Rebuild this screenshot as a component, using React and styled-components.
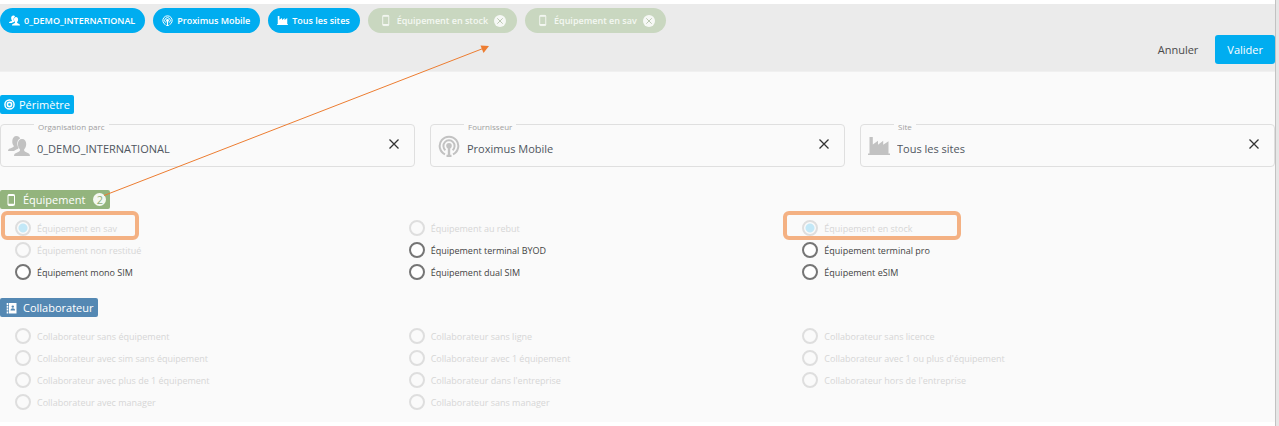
import React from 'react';
import styled, { createGlobalStyle, css } from 'styled-components';

const GlobalStyle = createGlobalStyle`
  *, *::after {
    box-sizing: border-box;
  }

  html {
    background-color: #ffffff;
  }

  body {
    margin: 0;
    font-family: 'Open Sans', sans-serif;
    font-size: 11px;
    color: #4a4a4a;
  }

  button, input {
    font-family: inherit;
  }
`;

const Page = styled.div`
  position: relative;
  display: flex;
  min-height: 100vh;
`;

const Content = styled.div`
  flex: 1;
  padding: 4px 0;
`;

const Gutter = styled.div`
  width: 4px;
  background-color: #e6e6e6;
  border-left: 1px solid #c2c2c2;
`;

const Header = styled.header`
  background-color: #ebebeb;
  padding: 4px 0 7px;
  border-bottom: 1px solid #f0f0f0;
`;

const Pills = styled.div`
  display: flex;
  flex-wrap: wrap;
  gap: 8px;
`;

const Pill = styled.div`
  display: flex;
  align-items: center;
  height: 25px;
  padding: 0 ${props => (props.$removable ? 11 : 10)}px 0 ${props => (props.$removable ? 11 : 9)}px;
  gap: ${props => (props.$removable ? 5 : 4)}px;
  border-radius: 13px;
  background-color: ${props => (props.$removable ? '#c9d7c0' : '#00adf0')};
  color: ${props => (props.$removable ? '#f4f7f2' : '#ffffff')};
  font-size: 9px;
  font-weight: 600;
  white-space: nowrap;
`;

const PillClose = styled.button`
  display: flex;
  align-items: center;
  justify-content: center;
  width: 12px;
  height: 12px;
  margin-left: 1px;
  padding: 0;
  border: 0;
  border-radius: 50%;
  background-color: #f6f8f5;
  color: #b5c3ac;
  cursor: pointer;
`;

const Actions = styled.div`
  display: flex;
  justify-content: flex-end;
  margin-top: 2px;
`;

const Button = styled.button`
  height: 29px;
  padding: 0 ${props => (props.$primary ? 12 : 17)}px;
  border: 0;
  border-radius: 3px;
  background-color: ${props => (props.$primary ? '#00adf0' : 'transparent')};
  color: ${props => (props.$primary ? '#ffffff' : '#4a4a4a')};
  font-size: 11px;
  font-weight: ${props => (props.$primary ? 500 : 400)};
  cursor: pointer;
`;

const Main = styled.main`
  background-color: #fafafa;
  padding: 23px 0 9px;
`;

const Section = styled.section`
  margin-bottom: ${props => props.$space || 0}px;
`;

const Tag = styled.h2`
  display: flex;
  align-items: center;
  width: fit-content;
  height: 19px;
  margin: 0;
  padding: 0 4px;
  gap: ${props => props.$gap || 4}px;
  border-radius: 2px;
  background-color: ${props => props.$color};
  color: #ffffff;
  font-size: 11px;
  font-weight: 500;
`;

const Count = styled.span`
  width: 13px;
  height: 13px;
  margin-left: 3px;
  border-radius: 50%;
  background-color: #f4f8f1;
  color: #8fae79;
  line-height: 13px;
  text-align: center;
`;

const Fields = styled.div`
  display: grid;
  grid-template-columns: repeat(3, 1fr);
  gap: 15px;
  margin-top: 10px;
`;

const Field = styled.div`
  position: relative;
  display: flex;
  align-items: center;
  height: 43px;
  padding: 0 15px 0 7px;
  border: 1px solid #dfdfdf;
  border-radius: 4px;
  color: #c2c2c2;
`;

const FieldLabel = styled.label`
  position: absolute;
  top: -5px;
  left: 33px;
  padding: 0 4px;
  background-color: #fafafa;
  color: #a0a0a0;
  font-size: 8px;
  line-height: 14px;
`;

const FieldInput = styled.input`
  flex: 1;
  min-width: 0;
  margin-left: 7px;
  padding: 5px 0 0;
  border: 0;
  background: transparent;
  color: #4f5660;
  font-size: 11px;
  outline: none;
`;

const Clear = styled.button`
  display: flex;
  padding: 0;
  border: 0;
  margin-bottom: 3px;
  background: transparent;
  color: #333333;
  cursor: pointer;
`;

const Options = styled.div`
  display: grid;
  grid-template-columns: repeat(3, 1fr);
  grid-auto-rows: 22px;
  margin-top: 8px;
  padding: 0 79px 0 15px;
`;

const Option = styled.label`
  position: relative;
  display: flex;
  align-items: center;
  gap: 6px;
  color: ${props => (props.$muted ? '#d6d6d6' : '#444444')};
  font-size: 9px;
  font-weight: 500;

  ${props => props.$mark && css`
    &::after {
      content: '';
      position: absolute;
      top: -6px;
      left: -${props.$mark.before}px;
      width: ${props.$mark.width}px;
      height: 29px;
      border: 4px solid #f4b183;
      border-radius: 6px;
    }
  `}
`;

const Radio = styled.input`
  appearance: none;
  width: 16px;
  height: 16px;
  margin: 0;
  border: 2px solid ${props => (props.disabled ? '#dedede' : '#757575')};
  border-radius: 50%;
  background-color: ${props => (props.disabled ? '#fafafa' : '#ffffff')};

  &:checked {
    background-image: radial-gradient(circle, #c3e8f7 4px, transparent 5px);
  }
`;

const Arrow = styled.svg`
  position: absolute;
  top: 0;
  left: 0;
  pointer-events: none;
`;

const UsersIcon = ({ size }) => (
  <svg width={size} height={size} viewBox="0 0 22 22" fill="currentColor">
    <path d="M8.5 1c2 0 3 1 3.6 2.400C9.800 4.400 9 6.800 9.300 9.500c.2 1.500.7 2.700 1.400 3.600-1 1.500-3.500 1.700-4.700 3H0c0-3.500 5.500-2.500 5.900-5C4.600 9.600 4.200 8 4.300 6 4.400 3 6 1 8.500 1z" />
    <path d="M14 4c2.700 0 4.200 2 4.200 5 0 2-.7 4-2 5.200v1.500c.6 1.800 5.800 1.500 5.800 5.300H6c0-3.800 5.300-3.500 5.900-5.300v-1.500c-1.300-1.200-2-3.200-2-5.200 0-3 1.500-5 4.100-5z" />
  </svg>
);

const AntennaIcon = ({ size }) => (
  <svg width={size} height={size} viewBox="0 0 22 22" fill="none" stroke="currentColor" strokeWidth="2">
    <path d="M7 19.400a9.300 9.300 0 1 1 8 0" />
    <path d="M7.400 15.200a5.600 5.600 0 1 1 7.200 0" />
    <circle cx="11" cy="10.800" r="2.800" fill="currentColor" stroke="none" />
    <path d="M11 11v10M8.500 21h5" strokeWidth="2.400" />
  </svg>
);

const FactoryIcon = ({ size }) => (
  <svg width={size} height={size} viewBox="0 0 22 22" fill="currentColor">
    <path d="M1.500 2h3.300v7.500L10 5.800v4l5.200-4v4l5.300-3.600V18.500H22V20H0v-1.500h1.500z" />
  </svg>
);

const PhoneIcon = ({ size }) => (
  <svg width={size} height={size} viewBox="0 0 14 14" fill="none" stroke="currentColor">
    <rect x="4" y="1.500" width="6.500" height="11" rx="1" />
    <path d="M4 2.200h6.500M4 11.500h6.500" strokeWidth="1.600" />
  </svg>
);

const TargetIcon = () => (
  <svg width="11" height="11" viewBox="0 0 12 12" fill="none" stroke="currentColor">
    <circle cx="6" cy="6" r="5" strokeWidth="1.600" />
    <circle cx="6" cy="6" r="2.300" strokeWidth="1.700" />
  </svg>
);

const BookIcon = () => (
  <svg width="14" height="14" viewBox="0 0 14 14">
    <path d="M5 2h7.500v10.500H5z" fill="#ffffff" />
    <path d="M3.500 2v10.500" stroke="#ffffff" strokeWidth="1.600" strokeDasharray="2 .8" />
    <circle cx="8.800" cy="5.600" r="1.200" fill="#5488b3" />
    <path d="M6.500 9.400c0-3 4.600-3 4.600 0z" fill="#5488b3" />
  </svg>
);

const CrossIcon = ({ size, width }) => (
  <svg width={size} height={size} viewBox="0 0 10 10" stroke="currentColor" strokeWidth={width}>
    <path d="M.5.5l9 9M9.500.5l-9 9" />
  </svg>
);

const perimeter = [
  { id: 'organisation', label: 'Organisation parc', value: '0_DEMO_INTERNATIONAL', Icon: UsersIcon },
  { id: 'fournisseur', label: 'Fournisseur', value: 'Proximus Mobile', Icon: AntennaIcon },
  { id: 'site', label: 'Site', value: 'Tous les sites', Icon: FactoryIcon },
];

const filters = ['Équipement en stock', 'Équipement en sav'];

const equipment = [
  { text: 'Équipement en sav', muted: true, checked: true, mark: { before: 14, width: 138 } },
  { text: 'Équipement au rebut', muted: true },
  { text: 'Équipement en stock', muted: true, checked: true, mark: { before: 19, width: 178 } },
  { text: 'Équipement non restitué', muted: true },
  { text: 'Équipement terminal BYOD' },
  { text: 'Équipement terminal pro' },
  { text: 'Équipement mono SIM' },
  { text: 'Équipement dual SIM' },
  { text: 'Équipement eSIM' },
];

const collaborators = [
  'Collaborateur sans équipement',
  'Collaborateur sans ligne',
  'Collaborateur sans licence',
  'Collaborateur avec sim sans équipement',
  'Collaborateur avec 1 équipement',
  "Collaborateur avec 1 ou plus d'équipement",
  'Collaborateur avec plus de 1 équipement',
  "Collaborateur dans l'entreprise",
  "Collaborateur hors de l'entreprise",
  'Collaborateur avec manager',
  'Collaborateur sans manager',
].map(text => ({ text, muted: true }));

const OptionList = ({ items }) => (
  <Options>
    {items.map(({ text, muted, checked, mark }) => (
      <Option key={text} $muted={muted} $mark={mark}>
        <Radio type="radio" name={text} disabled={muted} defaultChecked={checked} />
        {text}
      </Option>
    ))}
  </Options>
);

export default function App() {
  return (
    <Page>
      <GlobalStyle />
      <Content>
        <Header>
          <Pills>
            {perimeter.map(({ id, value, Icon }) => (
              <Pill key={id}><Icon size={11} />{value}</Pill>
            ))}
            {filters.map(text => (
              <Pill key={text} $removable>
                <PhoneIcon size={13} />
                {text}
                <PillClose aria-label="Retirer"><CrossIcon size={6} width={1.5} /></PillClose>
              </Pill>
            ))}
          </Pills>
          <Actions>
            <Button>Annuler</Button>
            <Button $primary>Valider</Button>
          </Actions>
        </Header>
        <Main>
          <Section $space={23}>
            <Tag $color="#00adf0"><TargetIcon />Périmètre</Tag>
            <Fields>
              {perimeter.map(({ id, label, value, Icon }) => (
                <Field key={id}>
                  <FieldLabel htmlFor={id}>{label}</FieldLabel>
                  <Icon size={22} />
                  <FieldInput id={id} defaultValue={value} />
                  <Clear aria-label="Effacer"><CrossIcon size={10} width={1.3} /></Clear>
                </Field>
              ))}
            </Fields>
          </Section>
          <Section $space={15}>
            <Tag $color="#93b47d" $gap={5}><PhoneIcon size={14} />Équipement<Count>2</Count></Tag>
            <OptionList items={equipment} />
          </Section>
          <Section>
            <Tag $color="#5488b3" $gap={5}><BookIcon />Collaborateur</Tag>
            <OptionList items={collaborators} />
          </Section>
        </Main>
      </Content>
      <Gutter />
      <Arrow width="500" height="200" viewBox="0 0 500 200">
        <path d="M104 195.500L483 48.500" stroke="#ed7d31" fill="none" />
        <path d="M489 46l-8.500-.5 3 7.500z" fill="#ed7d31" />
      </Arrow>
    </Page>
  );
}
